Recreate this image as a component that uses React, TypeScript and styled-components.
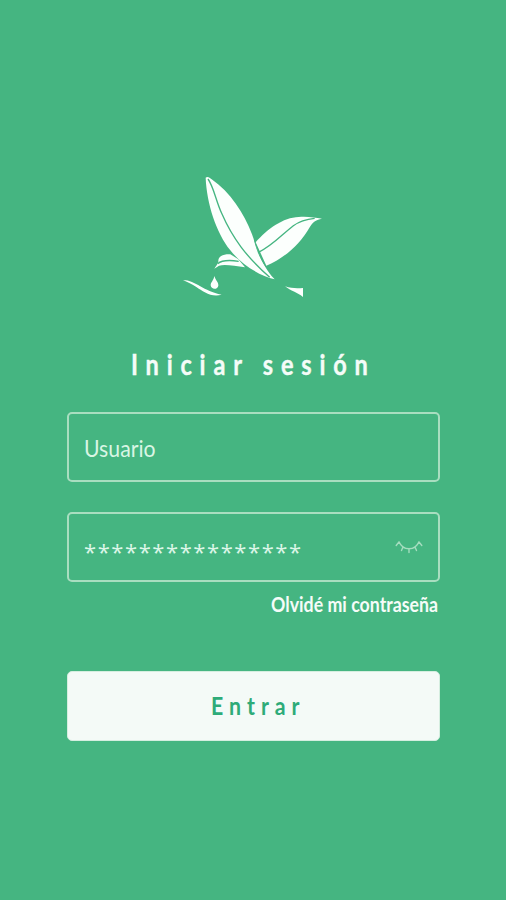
import React from "react";
import styled, { createGlobalStyle } from "styled-components";

const GREEN = "#45b581";

const GlobalStyle = createGlobalStyle`
  * { box-sizing: border-box; }
  body { margin: 0; background: ${GREEN}; }
`;

const Screen = styled.main`
  min-height: 900px;
  padding: 165px 66px 0 67px;
  display: flex;
  flex-direction: column;
  background: ${GREEN};
  color: #f5fcf8;
  font-family: Lato, "Open Sans", sans-serif;
`;

const Logo = styled.svg`
  display: block;
  width: 165px;
  height: 145px;
  margin-left: 103px;
`;

const Title = styled.h1`
  margin: 37px 0 0 64px;
  height: 34px;
  font-size: 28px;
  line-height: 34px;
  font-weight: 700;
  letter-spacing: 9.3px;
  white-space: nowrap;
  -webkit-text-stroke: 0.4px currentColor;
  transform: scaleX(0.84);
  transform-origin: left;
`;

const Form = styled.form`
  display: flex;
  flex-direction: column;
  margin-top: 31px;
`;

const Field = styled.div<{ $gap?: number }>`
  display: flex;
  align-items: center;
  justify-content: space-between;
  height: 70px;
  margin-top: ${({ $gap = 0 }) => $gap}px;
  padding: 0 15px;
  border: 2px solid #a9dec0;
  border-radius: 5px;
`;

const Placeholder = styled.span`
  padding-top: 1px;
  font-size: 24px;
  line-height: 28px;
  color: #d9f5e4;
  transform: scaleX(0.885);
  transform-origin: left;
`;

const Mask = styled.span`
  padding-top: 7px;
  font-family: "Open Sans", sans-serif;
  font-size: 22px;
  line-height: 28px;
  letter-spacing: 1.55px;
  color: #dcf6e7;
`;

const EyeIcon = styled.svg`
  display: block;
  width: 28px;
  height: 16px;
  fill: none;
  stroke: #a5ddbf;
  stroke-width: 1.4;
  stroke-linecap: round;
  stroke-linejoin: round;
`;

const Forgot = styled.a`
  align-self: flex-end;
  height: 24px;
  margin: 10px 2px 0 0;
  font-size: 20px;
  line-height: 24px;
  font-weight: 700;
  white-space: nowrap;
  transform: scaleX(0.888);
  transform-origin: right;
`;

const Submit = styled.button`
  height: 70px;
  margin-top: 55px;
  padding: 0 0 2px 9px;
  border: 1px solid #d5eee0;
  border-radius: 5px;
  background: #f4faf7;
  color: #2eab79;
  font-family: inherit;
  font-size: 24.5px;
  font-weight: 700;
  letter-spacing: 6.9px;
`;

const SubmitLabel = styled.span`
  display: inline-block;
  transform: scaleX(0.87);
`;

const BirdLogo = () => (
  <Logo viewBox="0 0 495 435" aria-label="Logo">
    <g fill="#fcfffd">
      <path d="M257 232C292 192 340 157 386 156C410 153 434 158 456 161C438 164 430 170 420 185C388 240 345 278 289 302Z" />
      <path d="M133 311C140 300 142 298 145 290C144 273 160 267 181 268L205 283L225 307C195 303 165 297 147 302Z" />
      <path d="M107 38C112 33 119 37 125 43C181 82 222 144 246 208C262 251 271 297 314 343C270 333 216 300 181 256C139 203 110 116 107 38Z" />
      <path d="M133 333C137 347 146 351 145 362C143 375 123 374 122 361C122 351 131 347 133 333Z" />
      <path d="M39 345C78 346 100 379 155 389C123 398 99 379 79 366C64 356 51 351 39 345Z" />
      <path d="M345 364C364 370 379 371 399 369V396C382 382 362 378 345 364Z" />
    </g>
    <g fill="none" stroke={GREEN} strokeWidth="4">
      <path d="M114 42C131 65 137 106 155 145C187 219 229 275 299 337" />
      <path d="M264 263C309 241 335 209 370 182C388 169 406 163 434 160" />
      <path d="M143 296C157 284 180 285 206 289" />
      <path d="M253 224C261 256 271 281 289 306" strokeWidth="3" />
    </g>
  </Logo>
);

export default function App() {
  return (
    <>
      <GlobalStyle />
      <Screen>
        <BirdLogo />
        <Title>Iniciar sesión</Title>
        <Form>
          <Field>
            <Placeholder>Usuario</Placeholder>
          </Field>
          <Field $gap={30}>
            <Mask>****************</Mask>
            <EyeIcon viewBox="0 0 28 16">
              <path d="M1.200 6.500L4 2.800C6 7.500 9.500 9.800 14 9.800S22 7.500 24 2.800L26.800 6.500M8 8L6.500 11.500M14 10V13.500M20 8L21.500 11.500" />
            </EyeIcon>
          </Field>
          <Forgot>Olvidé mi contraseña</Forgot>
          <Submit type="button">
            <SubmitLabel>Entrar</SubmitLabel>
          </Submit>
        </Form>
      </Screen>
    </>
  );
}
